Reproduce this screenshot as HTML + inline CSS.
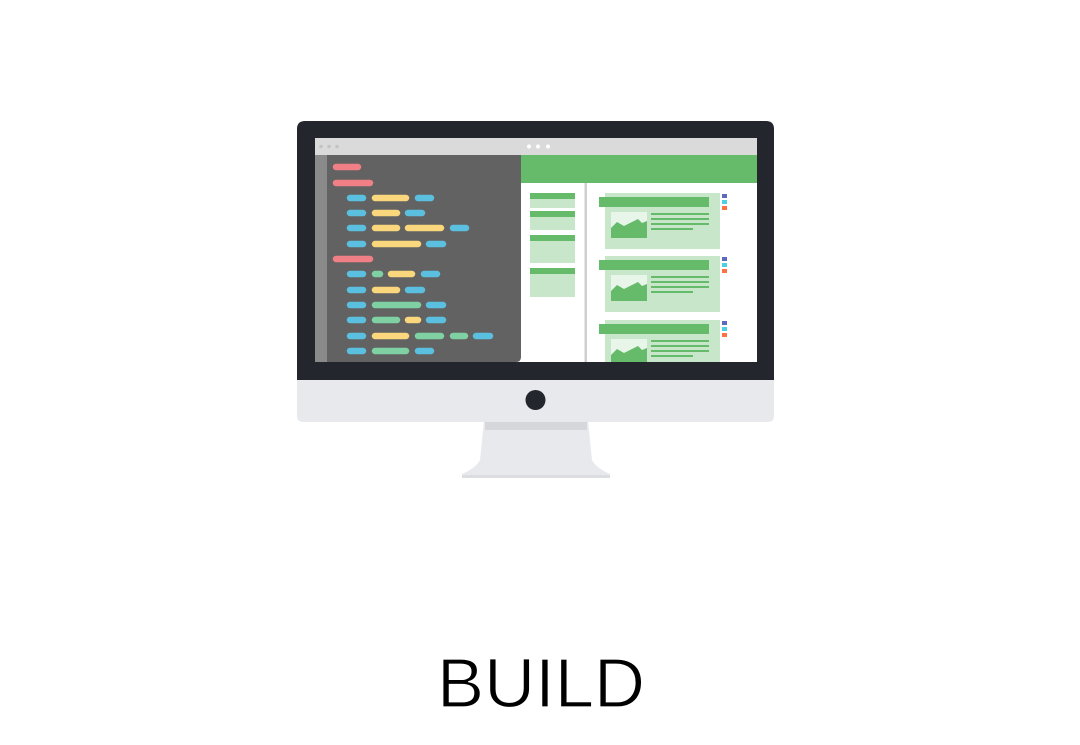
<!DOCTYPE html>
<html><head><meta charset="utf-8"><style>
html,body{margin:0;padding:0;background:#fff;width:1080px;height:745px;overflow:hidden}
svg{position:absolute;left:0;top:0}
</style></head><body>
<svg width="1080" height="745" viewBox="0 0 1080 745" xmlns="http://www.w3.org/2000/svg">
<defs>
<g id="card">
<rect x="605" y="193" width="115" height="56" fill="#c8e6c9"/>
<rect x="599" y="197" width="110" height="10" fill="#66bb6a"/>
<rect x="611" y="212" width="36" height="26" fill="#e8f5e9"/>
<polygon points="611,228 617,222 624,226 638,219 642,223 647,221 647,238 611,238" fill="#66bb6a"/>
<rect x="651" y="213" width="58" height="2" fill="#66bb6a"/>
<rect x="651" y="218" width="58" height="2" fill="#66bb6a"/>
<rect x="651" y="223" width="58" height="2" fill="#66bb6a"/>
<rect x="651" y="228" width="42" height="2" fill="#66bb6a"/>
<rect x="722" y="194" width="5" height="4" fill="#5c6bc0"/>
<rect x="722" y="200" width="5" height="4" fill="#4dd0e1"/>
<rect x="722" y="206" width="5" height="4" fill="#ff7043"/>
</g>
<clipPath id="scr"><rect x="315" y="138" width="442" height="224"/></clipPath>
</defs>
<!-- stand -->
<path d="M484 421 L588 421 L592 460 Q596 468 610 474 L610 478 L462 478 L462 474 Q476 468 480 460 Z" fill="#e8e9ed"/>
<rect x="485" y="421" width="102" height="9" fill="#d6d7db"/>
<rect x="462" y="475" width="148" height="3" fill="#dcdde1"/>
<!-- monitor -->
<path d="M297 129 Q297 121 305 121 L766 121 Q774 121 774 129 L774 381 L297 381 Z" fill="#23262d"/>
<path d="M297 380 L774 380 L774 416 Q774 422 768 422 L303 422 Q297 422 297 416 Z" fill="#e8e9ed"/>
<circle cx="535.5" cy="400" r="10" fill="#23262d"/>
<!-- screen -->
<g clip-path="url(#scr)">
<rect x="315" y="138" width="442" height="224" fill="#fff"/>
<rect x="315" y="138" width="442" height="17" fill="#dadada"/>
<circle cx="321" cy="146.5" r="1.8" fill="#c4c4c4"/><circle cx="329" cy="146.5" r="1.8" fill="#c4c4c4"/><circle cx="337" cy="146.5" r="1.8" fill="#c4c4c4"/>
<circle cx="529" cy="146.5" r="2" fill="#fff"/><circle cx="538" cy="146.5" r="2" fill="#fff"/><circle cx="548" cy="146.5" r="2" fill="#fff"/>
<path d="M315 155 L521 155 L521 357 Q521 362 516 362 L315 362 Z" fill="#626262"/>
<rect x="315" y="155" width="12" height="207" fill="#8a8a8a"/>
<g stroke-linecap="round" stroke-width="6.5">
<g stroke="#f17f86"><line x1="336" y1="167" x2="358" y2="167"/><line x1="336" y1="183" x2="370" y2="183"/><line x1="336" y1="259" x2="370" y2="259"/></g>
<g stroke="#5bc0e0">
<line x1="350" y1="198" x2="363" y2="198"/><line x1="418" y1="198" x2="431" y2="198"/>
<line x1="350" y1="213" x2="363" y2="213"/><line x1="408" y1="213" x2="422" y2="213"/>
<line x1="350" y1="228" x2="363" y2="228"/><line x1="453" y1="228" x2="466" y2="228"/>
<line x1="350" y1="244" x2="363" y2="244"/><line x1="429" y1="244" x2="443" y2="244"/>
<line x1="350" y1="274" x2="363" y2="274"/><line x1="424" y1="274" x2="437" y2="274"/>
<line x1="350" y1="290" x2="363" y2="290"/><line x1="408" y1="290" x2="422" y2="290"/>
<line x1="350" y1="305" x2="363" y2="305"/><line x1="429" y1="305" x2="443" y2="305"/>
<line x1="350" y1="320" x2="363" y2="320"/><line x1="429" y1="320" x2="443" y2="320"/>
<line x1="350" y1="336" x2="363" y2="336"/><line x1="476" y1="336" x2="490" y2="336"/>
<line x1="350" y1="351" x2="363" y2="351"/><line x1="418" y1="351" x2="431" y2="351"/>
</g>
<g stroke="#fad67c">
<line x1="375" y1="198" x2="406" y2="198"/>
<line x1="375" y1="213" x2="397" y2="213"/>
<line x1="375" y1="228" x2="397" y2="228"/><line x1="408" y1="228" x2="441" y2="228"/>
<line x1="375" y1="244" x2="418" y2="244"/>
<line x1="391" y1="274" x2="412" y2="274"/>
<line x1="375" y1="290" x2="397" y2="290"/>
<line x1="408" y1="320" x2="418" y2="320"/>
<line x1="375" y1="336" x2="406" y2="336"/>
</g>
<g stroke="#7fd0a3">
<line x1="375" y1="274" x2="380" y2="274"/>
<line x1="375" y1="305" x2="418" y2="305"/>
<line x1="375" y1="320" x2="397" y2="320"/>
<line x1="418" y1="336" x2="441" y2="336"/><line x1="453" y1="336" x2="465" y2="336"/>
<line x1="375" y1="351" x2="406" y2="351"/>
</g>
</g>
<rect x="521" y="155" width="236" height="28" fill="#66bb6a"/>
<rect x="584.5" y="183" width="2.5" height="179" fill="#cfcfcf"/>
<g fill="#c8e6c9"><rect x="530" y="193" width="45" height="15"/><rect x="530" y="211" width="45" height="19"/><rect x="530" y="235" width="45" height="28"/><rect x="530" y="268" width="45" height="29"/></g>
<g fill="#66bb6a"><rect x="530" y="193" width="45" height="6"/><rect x="530" y="211" width="45" height="6"/><rect x="530" y="235" width="45" height="6"/><rect x="530" y="268" width="45" height="6"/></g>
<use href="#card"/>
<use href="#card" transform="translate(0,63)"/>
<use href="#card" transform="translate(0,127)"/>
</g>
<text x="541" y="707" text-anchor="middle" font-family="Liberation Sans, sans-serif" font-size="70" textLength="208" lengthAdjust="spacingAndGlyphs" fill="#000" stroke="#fff" stroke-width="1.2" paint-order="normal">BUILD</text>
</svg>
</body></html>
